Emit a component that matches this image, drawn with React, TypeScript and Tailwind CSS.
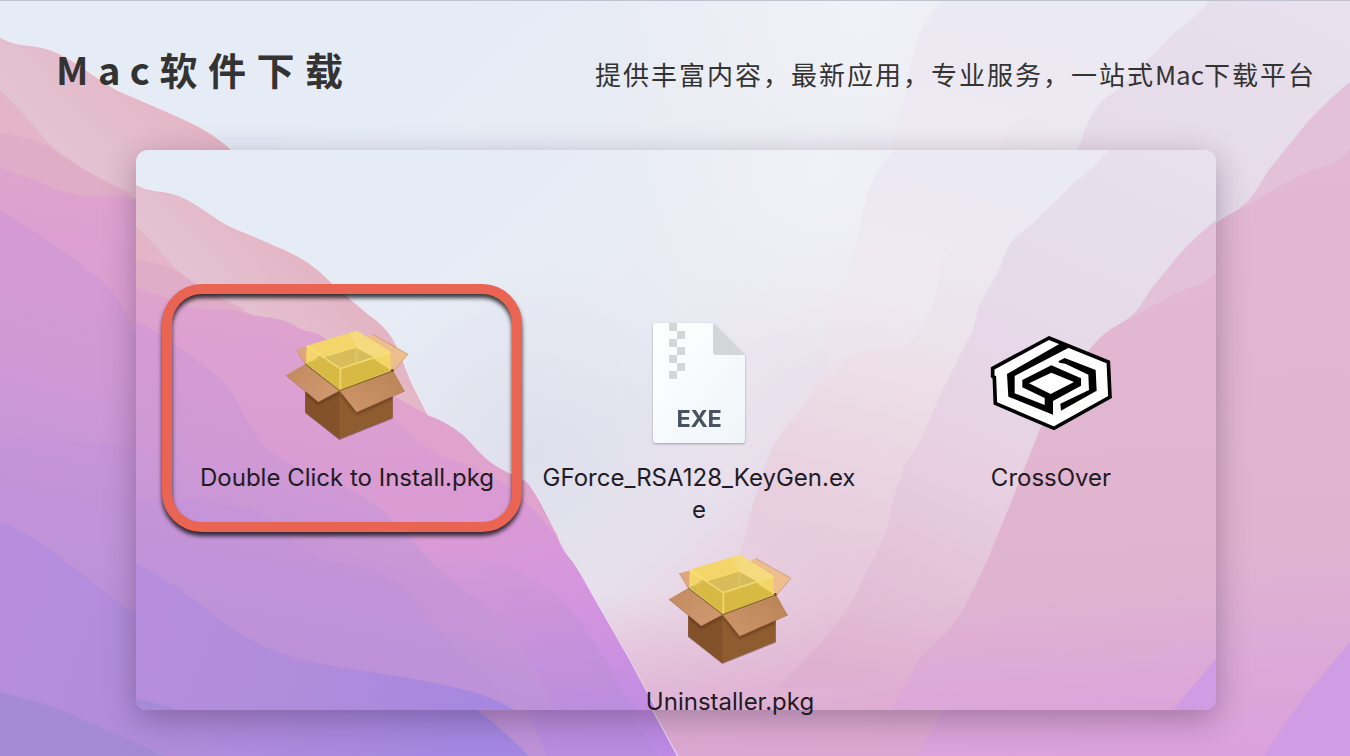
import React from 'react';

function WallpaperDefs() {
  return (
    <defs>
      <linearGradient id="sky" gradientUnits="userSpaceOnUse" x1="420" y1="0" x2="1000" y2="640">
        <stop offset="0" stopColor="#e5ecf6" />
        <stop offset="0.35" stopColor="#e9ebf3" />
        <stop offset="0.6" stopColor="#e9e0ec" />
        <stop offset="0.85" stopColor="#e6c6da" />
        <stop offset="1" stopColor="#e1b5d0" />
      </linearGradient>
      <radialGradient id="skyGrey" gradientUnits="userSpaceOnUse" cx="500" cy="380" r="240">
        <stop offset="0" stopColor="#dddfeb" />
        <stop offset="1" stopColor="#dddfeb" stopOpacity="0" />
      </radialGradient>
      <radialGradient id="skyLight" gradientUnits="userSpaceOnUse" cx="860" cy="20" r="260">
        <stop offset="0" stopColor="#f1f2f7" />
        <stop offset="1" stopColor="#f1f2f7" stopOpacity="0" />
      </radialGradient>
      <linearGradient id="lilac" gradientUnits="userSpaceOnUse" x1="1000" y1="0" x2="860" y2="600">
        <stop offset="0" stopColor="#ebe9f4" />
        <stop offset="0.3" stopColor="#efe9f1" />
        <stop offset="0.55" stopColor="#ecdfe9" stopOpacity="0.7" />
        <stop offset="1" stopColor="#e8d2e2" stopOpacity="0" />
      </linearGradient>
      <linearGradient id="hump" gradientUnits="userSpaceOnUse" x1="960" y1="90" x2="840" y2="600">
        <stop offset="0" stopColor="#ece9f2" />
        <stop offset="0.35" stopColor="#ede0e8" />
        <stop offset="0.7" stopColor="#e8cfdf" />
        <stop offset="1" stopColor="#e3bdd5" stopOpacity="0" />
      </linearGradient>
      <linearGradient id="slope" gradientUnits="userSpaceOnUse" x1="1280" y1="0" x2="960" y2="700">
        <stop offset="0" stopColor="#e8e0ec" />
        <stop offset="0.4" stopColor="#e6d8e8" />
        <stop offset="0.6" stopColor="#e7d0e1" />
        <stop offset="0.8" stopColor="#e3c2d8" />
        <stop offset="1" stopColor="#e1b5d0" />
      </linearGradient>
      <linearGradient id="rose" gradientUnits="userSpaceOnUse" x1="1220" y1="150" x2="1260" y2="756">
        <stop offset="0" stopColor="#e3b8d2" />
        <stop offset="0.65" stopColor="#e0b4d0" />
        <stop offset="0.85" stopColor="#dca9d8" />
        <stop offset="1" stopColor="#dba0dd" />
      </linearGradient>
      <linearGradient id="roseFade" gradientUnits="userSpaceOnUse" x1="0" y1="560" x2="0" y2="756">
        <stop offset="0" stopColor="#dfb2d0" stopOpacity="0" />
        <stop offset="1" stopColor="#dca6d3" />
      </linearGradient>
      <linearGradient id="blush" gradientUnits="userSpaceOnUse" x1="200" y1="90" x2="80" y2="200">
        <stop offset="0" stopColor="#e3b3c3" />
        <stop offset="0.5" stopColor="#e4bccb" />
        <stop offset="1" stopColor="#e3c4d5" />
      </linearGradient>
      <linearGradient id="magenta" gradientUnits="userSpaceOnUse" x1="300" y1="200" x2="220" y2="700">
        <stop offset="0" stopColor="#dfa3cf" />
        <stop offset="0.45" stopColor="#d99cd3" />
        <stop offset="1" stopColor="#c58edc" />
      </linearGradient>
      <linearGradient id="orchid" gradientUnits="userSpaceOnUse" x1="260" y1="220" x2="150" y2="600">
        <stop offset="0" stopColor="#d99bd2" />
        <stop offset="0.5" stopColor="#cf99d5" />
        <stop offset="1" stopColor="#bf92d8" />
      </linearGradient>
      <linearGradient id="plum" gradientUnits="userSpaceOnUse" x1="220" y1="450" x2="180" y2="640">
        <stop offset="0" stopColor="#c795d8" />
        <stop offset="1" stopColor="#bd91d8" />
      </linearGradient>
      <linearGradient id="ridge" gradientUnits="userSpaceOnUse" x1="420" y1="400" x2="620" y2="756">
        <stop offset="0" stopColor="#db9cd2" />
        <stop offset="0.5" stopColor="#d695df" />
        <stop offset="1" stopColor="#bc8ae6" />
      </linearGradient>
      <linearGradient id="fold" gradientUnits="userSpaceOnUse" x1="430" y1="490" x2="470" y2="756">
        <stop offset="0" stopColor="#d79bd7" />
        <stop offset="0.5" stopColor="#c792da" />
        <stop offset="1" stopColor="#b98cdf" />
      </linearGradient>
      <linearGradient id="violet" gradientUnits="userSpaceOnUse" x1="0" y1="560" x2="460" y2="720">
        <stop offset="0" stopColor="#b68edd" />
        <stop offset="0.5" stopColor="#b08cdb" />
        <stop offset="1" stopColor="#a487e1" />
      </linearGradient>
    </defs>
  );
}

function WallpaperShapes() {
  return (
    <g id="wallpaper">
      <rect x="-20" y="-20" width="1400" height="800" fill="url(#sky)" />
      <rect x="-20" y="-20" width="1400" height="800" fill="url(#skyGrey)" />
      <rect x="-20" y="-20" width="1400" height="800" fill="url(#skyLight)" />
      <path d="M955-20 942 0Q922 24 917 42C905 75 905 110 890 150S850 230 875 300L870 600H1380V-20Z" fill="url(#lilac)" />
      <path d="M1110 70 1045 80Q1036 105 1024 117 1004 132 1004 145 1002 180 990 205 978 232 955 247H920Q900 245 871 276C850 290 840 315 821 336Q795 365 785 400L771 444Q763 490 735 560L700 640H1000L1110 400Z" fill="url(#hump)" />
      <path d="M1226-20 1210 0Q1196 18 1175 32L1121 87C1108 97 1101 100 1095 110 1084 125 1084 137 1076 152L1058 183C1050 200 1050 212 1045 225L1005 305 980 365C972 380 960 390 955 412L945 444Q942 475 930 499L893 572Q872 610 800 680H1380V-20Z" fill="url(#slope)" />
      <rect x="560" y="560" width="820" height="230" fill="url(#roseFade)" />
      <path d="M1380 55 1350 82Q1322 105 1305 125L1268 171C1258 187 1252 200 1237 210L1190 250 1380 260Z" fill="#e3c2d9" />
      <path d="M1380 140 1350 149Q1342 160 1325 166 1298 174 1280 186L1246 206C1222 218 1208 226 1190 250 1165 283 1150 310 1130 349L1115 387 1093 444 1071 499Q1057 535 1039 568 1025 600 980 640L900 790H1380Z" fill="url(#rose)" />
      <path d="M1380 606 1350 642 1320 678Q1288 715 1250 780H1380Z" fill="#d09ce3" />

      <path d="M-20 26 0 37Q10 43 25 45 44 46 60 54C82 65 98 80 117 90L170 113C197 125 212 132 232 150L246 164 290 202Q310 216 320 232C333 255 336 272 349 299L365 331 300 400-20 300Z" fill="url(#blush)" />
      <path d="M-20 70 0 90Q35 125 45 140C65 158 90 175 136 195H-20Z" fill="#e4b5c8" />
      <path d="M-20 130 0 133Q35 138 50 147C80 170 110 183 142 202H-20Z" fill="#e0adc9" />
      <path d="M-20 160 0 168 40 182Q68 197 95 196L121 197Q142 204 176 208 190 211 205 221C215 226 222 223 232 230Q250 240 262 258 300 298 365 331 385 337 409 356C425 372 432 384 451 396 475 411 483 409 492 420 508 443 516 465 527 484Q532 501 539 509 548 519 555 532L580 577 614 637 651 707 696 790H-20Z" fill="url(#magenta)" />
      <path d="M262 258Q300 298 365 331 385 337 409 356C425 372 432 384 451 396 475 411 483 409 492 420L539 509Q515 468 489 444 460 410 392 388 330 360 262 258Z" fill="#dfa3cd" />
      <path d="M300 380Q340 368 392 388 460 410 489 444 515 468 539 509 548 519 555 532L580 577 614 637 651 707 696 790H300Z" fill="url(#ridge)" opacity="0.85" />
      <path d="M300 500Q430 505 476 530C510 545 530 560 548 585L580 632 609 683 682 790H300Z" fill="url(#fold)" />
      <path d="M-20 200 0 210C35 230 70 255 101 280 130 308 135 340 160 370 190 398 215 400 245 415 290 435 318 458 342 486Q372 528 430 570 500 630 560 790H-20Z" fill="url(#orchid)" />
      <path d="M-20 440Q50 435 96 444 135 444 164 461C185 480 205 500 230 513 262 523 280 522 301 530 340 545 355 580 392 620Q440 660 500 740H-20Z" fill="url(#plum)" />
      <path d="M-20 512 0 521C35 535 65 562 90 580 120 603 130 613 170 630 220 652 290 657 330 664 380 674 430 682 464 702Q500 722 560 790H-20Z" fill="url(#violet)" />
      <path d="M-20 690 0 692Q45 702 80 718L165 756 230 790H-20Z" fill="#a28ad4" opacity="0.85" />

      <path d="M-20 26 0 37Q10 43 25 45 44 46 60 54C82 65 98 80 117 90L170 113C197 125 212 132 232 150L246 164 290 202Q310 216 320 232C333 255 336 272 349 299L365 331Q385 337 409 356C425 372 432 384 451 396 475 411 483 409 492 420 508 443 516 465 527 484Q532 501 539 509 548 519 555 532L580 577 614 637 651 707 696 790" fill="none" stroke="#f3f1f8" strokeWidth="1.2" opacity="0.7" />
    </g>
  );
}

function PackageIcon() {
  return (
    <svg viewBox="36 0 384 384" className="size-32">
      <defs>
        <linearGradient id="flapLeft" x1="0" y1="0" x2="1" y2="1">
          <stop offset="0" stopColor="#c28a5e" />
          <stop offset="1" stopColor="#d19a72" />
        </linearGradient>
        <linearGradient id="flapRight" x1="0" y1="1" x2="1" y2="0">
          <stop offset="0" stopColor="#cf976b" />
          <stop offset="1" stopColor="#b98356" />
        </linearGradient>
        <filter id="flapShadow" x="-20%" y="-20%" width="140%" height="150%">
          <feDropShadow dx="0" dy="6" stdDeviation="4" floodColor="#3d1e07" floodOpacity="0.55" />
        </filter>
        <filter id="boxShadow" x="-10%" y="-10%" width="120%" height="120%">
          <feDropShadow dx="0" dy="2" stdDeviation="2" floodColor="#30102a" floodOpacity="0.6" />
        </filter>
        <clipPath id="boxBody">
          <path d="M103 132 206 212 365 152V293L205 357 103 277Z" />
        </clipPath>
      </defs>
      <path d="M76 88 122 76 130 125 103 133Z" fill="#dea67f" />
      <path d="M290 50 305 43 411 103 367 154 340 130Z" fill="#edbd8d" />
      <path d="M76 88 103 133M305 43 411 103 367 154" fill="none" stroke="#c48c5f" strokeWidth="2" />
      <path d="M103 132 206 212 365 152V293L205 357 103 277Z" fill="#8e5c2f" filter="url(#boxShadow)" />
      <path d="M103 132 205 212V357L103 277Z" fill="#83512a" />
      <g clipPath="url(#boxBody)">
        <path
          d="M45 166 103 132 206 212 142 246ZM206 213 367 152 401 213 257 277Z"
          fill="#70401a"
          filter="url(#flapShadow)"
        />
      </g>
      <path d="M107 77 258 32 358 95 360 151 208 212 105 130Z" fill="#f4d569" />
      <path d="M235 39 258 32 358 95 300 112 262 90Z" fill="#f6da7e" />
      <path d="M105 129 256 84 360 151 208 212Z" fill="#d8b944" />
      <path d="M126 123 256 84 314 115 208 145 147 105Z" fill="#d8bb5b" />
      <path d="M256 84V126" stroke="#e6c968" strokeWidth="7" opacity="0.6" />
      <path d="M107 78 208 146 358 97M208 146V208" fill="none" stroke="#f8e37d" strokeWidth="5" opacity="0.75" />
      <path d="M45 166 103 132 206 212 142 246Z" fill="url(#flapLeft)" />
      <path d="M206 213 367 152 401 213 257 277Z" fill="url(#flapRight)" />
      <path d="M45 166 142 246 206 212 257 277 401 213" fill="none" stroke="#a66c3f" strokeWidth="2" />
      <path d="M103 132 206 212 367 152" fill="none" stroke="#7d6220" strokeWidth="3" />
      <circle cx="364" cy="151" r="4" fill="#754224" />
    </svg>
  );
}

function ExeIcon() {
  const squares = [0, 1, 2, 3, 4, 5, 6];
  return (
    <svg viewBox="0 0 128 128" className="size-32 drop-shadow-[0_1px_1px_rgba(60,50,80,0.4)]">
      <defs>
        <linearGradient id="sheet" x1="0" y1="0" x2="1" y2="1">
          <stop offset="0" stopColor="#ffffff" />
          <stop offset="1" stopColor="#eff5f8" />
        </linearGradient>
      </defs>
      <path d="M21 3H78L110 35V120Q110 123 107 123H21Q18 123 18 120V6Q18 3 21 3Z" fill="url(#sheet)" />
      <path d="M78 3 110 35H81Q78 35 78 32Z" fill="#d4d5d7" />
      {squares.map((i) => (
        <rect key={i} x={i % 2 ? 42 : 34} y={3 + i * 8} width="8" height="8" fill="#d5d6d8" />
      ))}
      <text x="64" y="107" textAnchor="middle" className="fill-[#475363] font-['Inter',sans-serif] text-[23.5px] font-bold tracking-[-0.3px]">
        EXE
      </text>
    </svg>
  );
}

function CrossOverIcon() {
  return (
    <svg viewBox="0 0 435 360" className="w-[145px] h-[120px]">
      <path d="M210 42 388 114 393 219 225 313 49 238 46 160 41 157V133Z" fill="#fff" stroke="#000" strokeWidth="11" />
      <path
        fillRule="evenodd"
        d="M245 58 272 70 107 156V208L197 243V222L130 190V168L217 124 306 163V185L222 231V272L88 218 84 150ZM217 146 150 178 215 210 285 174Z"
      />
      <path d="M238 112 257 102 350 138 353 200 246 260 244 239 330 198 328 152 259 119 241 116Z" />
    </svg>
  );
}

interface FileItemProps {
  label: string;
  children: React.ReactNode;
}

function FileItem({ label, children }: FileItemProps) {
  return (
    <div className="w-[352px] h-56 shrink-0 flex flex-col items-center">
      <div className="w-32 h-32 flex items-center justify-center">{children}</div>
      <div className="mt-3.5 w-[320px] text-center break-all font-['Inter',sans-serif] text-[24px] leading-8 text-[#211b24]">
        {label}
      </div>
    </div>
  );
}

export default function App() {
  return (
    <div className="relative w-[1350px] h-[756px] overflow-hidden">
      <svg viewBox="0 0 1350 756" className="absolute inset-0 w-full h-full">
        <WallpaperDefs />
        <WallpaperShapes />
      </svg>

      <div className="relative border-t border-[#bfc3cf]">
        <header className="h-[149px] pl-[56px] pr-[34px] flex justify-between text-[#333] whitespace-nowrap font-['Noto_Sans_CJK_SC',sans-serif]">
          <h1 className="mt-[39px] text-[38px] leading-[58px] font-bold tracking-[10.5px]">
            <span className="tracking-[9.5px]">Mac</span>软件下载
          </h1>
          <p className="mt-[53px] text-[26px] leading-10 tracking-[2px]">
            提供丰富内容，最新应用，专业服务，一站式<span className="tracking-normal">Mac</span>下载平台
          </p>
        </header>

        <main className="relative ml-[136px] w-[1080px] h-[560px] rounded-xl shadow-[0_9px_32px_rgba(40,20,50,0.32)]">
          <svg viewBox="136 150 1080 560" className="absolute inset-0 w-full h-full rounded-xl">
            <use href="#wallpaper" transform="translate(136 155.6) scale(0.8 0.784)" />
          </svg>

          <div className="relative pt-[170px] pl-[35px]">
            <div className="flex">
              <FileItem label="Double Click to Install.pkg">
                <PackageIcon />
              </FileItem>
              <FileItem label="GForce_RSA128_KeyGen.exe">
                <ExeIcon />
              </FileItem>
              <FileItem label="CrossOver">
                <div className="shrink-0">
                  <CrossOverIcon />
                </div>
              </FileItem>
            </div>
            <div className="pl-[383px]">
              <FileItem label="Uninstaller.pkg">
                <PackageIcon />
              </FileItem>
            </div>
          </div>

          {/* callout around the installer */}
          <div className="absolute left-[26px] top-[134px] w-[360px] h-[248px] rounded-[40px] border-10 border-[#e96452] drop-shadow-[0_4px_2px_rgba(0,0,0,0.75)]" />
        </main>
      </div>
    </div>
  );
}
